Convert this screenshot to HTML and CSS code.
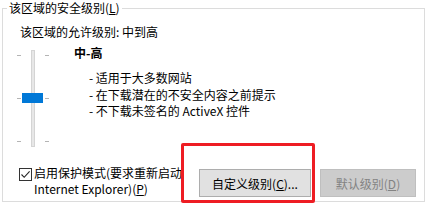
FILE: index.html
```html
<!DOCTYPE html>
<html lang="zh-CN">
<head>
    <meta charset="UTF-8">
    <meta name="viewport" content="width=device-width, initial-scale=1.0">
    <title>安全级别</title>
    <link rel="stylesheet" href="styles.css">
</head>
<body>

    <fieldset class="zone">
        <legend>该区域的安全级别(<u>L</u>)</legend>

        <div class="allow">该区域的允许级别: 中到高</div>

        <div class="level">
            <!-- 滑块 -->
            <div class="slider">
                <span class="tick tick-l" style="top: 5px"></span>
                <span class="tick tick-r" style="top: 5px"></span>
                <span class="tick tick-l" style="top: 48px"></span>
                <span class="tick tick-r" style="top: 48px"></span>
                <span class="tick tick-l" style="top: 91px"></span>
                <span class="tick tick-r" style="top: 91px"></span>
                <div class="track"></div>
                <div class="thumb"></div>
            </div>

            <div class="level-info">
                <div class="level-name">中-高</div>
                <ul class="level-list">
                    <li>- 适用于大多数网站</li>
                    <li>- 在下载潜在的不安全内容之前提示</li>
                    <li>- 不下载未签名的 ActiveX 控件</li>
                </ul>
            </div>
        </div>

        <div class="bottom">
            <label class="protect">
                <span class="checkbox">
                    <svg width="11" height="11" viewBox="0 0 11 11">
                        <path d="M1.5 5.5 L4.2 8.3 L9.6 2.4" fill="none" stroke="#222" stroke-width="1.1"/>
                    </svg>
                </span>
                <span class="protect-text">启用保护模式(要求重新启动<br>Internet Explorer)(<u>P</u>)</span>
            </label>

            <div class="buttons">
                <button class="btn btn-custom">自定义级别(<u>C</u>)...</button>
                <button class="btn" disabled>默认级别(<u>D</u>)</button>
            </div>
        </div>

        <!-- 标注框 -->
        <div class="highlight"></div>
    </fieldset>

</body>
</html>
```

FILE: styles.css
```css
body {
    margin: 0;
    background-color: #fff;
    color: #000;
    font-family: "Noto Sans CJK SC", sans-serif;
    font-size: 12px;
    line-height: 16px;
    width: 425px;
    height: 204px;
    overflow: hidden;
}

.zone {
    position: relative;
    margin: 0 0 0 2px;
    padding: 8px 8px 4px 0;
    border: 1px solid #dcdcdc;
    width: 413px;
    min-width: 0;
}

.zone legend {
    margin-left: 4px;
    padding: 0 2px;
    line-height: 16px;
}

.allow {
    margin-left: 17px;
}

.level {
    display: flex;
    margin-top: 5px;
}

.slider {
    position: relative;
    width: 32px;
    height: 97px;
    margin: 5px 0 0 14px;
}

.track {
    position: absolute;
    left: 14px;
    top: 0;
    width: 2px;
    height: 95px;
    background-color: #e7e7e7;
    border: 1px solid #d4d4d4;
}

.thumb {
    position: absolute;
    left: 5px;
    top: 43px;
    width: 21px;
    height: 10px;
    background-color: #0078d7;
}

.tick {
    position: absolute;
    width: 4px;
    height: 1px;
    background-color: #b4b4b4;
}

.tick-l {
    left: 0;
}

.tick-r {
    left: 28px;
}

.level-info {
    margin-left: 25px;
}

.level-name {
    font-weight: bold;
}

.level-list {
    list-style: none;
    margin: 9px 0 0 15px;
    padding: 0;
    line-height: 16.5px;
}

.bottom {
    display: flex;
    align-items: flex-start;
    margin-top: 18px;
}

.protect {
    display: flex;
    align-items: flex-start;
    margin-left: 16px;
    line-height: 16px;
}

.checkbox {
    display: flex;
    align-items: center;
    justify-content: center;
    box-sizing: border-box;
    width: 13px;
    height: 13px;
    margin-top: 3px;
    border: 1px solid #333;
    background-color: #fff;
}

.protect-text {
    margin-left: 2px;
}

.buttons {
    display: flex;
    gap: 9px;
    margin-left: auto;
    margin-top: 4px;
}

.btn {
    height: 28px;
    width: 96px;
    padding: 0;
    font-family: inherit;
    font-size: 12px;
    color: #000;
    background-color: #e1e1e1;
    border: 1px solid #adadad;
}

.btn-custom {
    width: 112px;
}

.btn:disabled {
    color: #838383;
    background-color: #cccccc;
    border-color: #bfbfbf;
}

.highlight {
    position: absolute;
    left: 178px;
    top: 127px;
    width: 128px;
    height: 54px;
    border: 3px solid #ee1d23;
    border-radius: 2px;
}
```
